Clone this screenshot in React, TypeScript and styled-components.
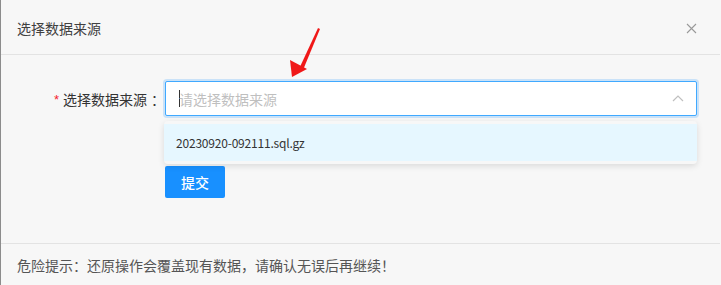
import styled, { createGlobalStyle } from "styled-components"

const GlobalStyle = createGlobalStyle`
    html, body {
        margin: 0;
        padding: 0;
        background: #f7f7f7;
    }
    body {
        font-family: "Noto Sans CJK SC", "Noto Sans", sans-serif;
    }
`

const App = () => {
    return (
        <Modal>
            <GlobalStyle />
            <Header>
                <Title>选择数据来源</Title>
                <Close>
                    <svg width="11" height="11" viewBox="0 0 11 11">
                        <path d="M1 1 L10 10 M10 1 L1 10" stroke="#999" strokeWidth="1.1" fill="none" />
                    </svg>
                </Close>
            </Header>
            <Body>
                <FormRow>
                    <Label>
                        <Required>*</Required>选择数据来源<Colon>：</Colon>
                    </Label>
                    <Field>
                        <Select>
                            <Caret />
                            <Placeholder>请选择数据来源</Placeholder>
                            <svg width="12" height="8" viewBox="0 0 12 8">
                                <path d="M1 7 L6 2 L11 7" stroke="#bfbfbf" strokeWidth="1.2" fill="none" />
                            </svg>
                        </Select>
                        <Dropdown>
                            <Option active>20230920-092111.sql.gz</Option>
                        </Dropdown>
                        <SubmitButton>提交</SubmitButton>
                    </Field>
                </FormRow>
                <Pointer width="40" height="60" viewBox="0 0 40 60">
                    <path d="M29 1 L31 2 L14 43 L10 42 Z" fill="#f01818" />
                    <path d="M3 50 L1 33 L18 42 Z" fill="#f01818" />
                </Pointer>
            </Body>
            <Footer>危险提示：还原操作会覆盖现有数据，请确认无误后再继续！</Footer>
        </Modal>
    )
}

const Modal = styled.div`
    position: relative;
    width: 720px;
    height: 285px;
    border-left: 1px solid #8c8c8c;
    background: #f7f7f7;
    display: flex;
    flex-direction: column;
    box-sizing: border-box;
`

const Header = styled.div`
    height: 54px;
    flex-shrink: 0;
    padding: 0 23px 0 16px;
    display: flex;
    align-items: center;
    justify-content: space-between;
    border-bottom: 1px solid #e3e3e3;
`

const Title = styled.div`
    font-size: 14px;
    color: #404040;
    margin-top: 1px;
`

const Close = styled.div`
    display: flex;
    margin-top: 2px;
`

const Body = styled.div`
    flex: 1;
    padding-top: 26px;
    position: relative;
`

const FormRow = styled.div`
    display: flex;
    align-items: flex-start;
`

const Label = styled.div`
    width: 164px;
    height: 36px;
    flex-shrink: 0;
    display: flex;
    align-items: center;
    justify-content: flex-end;
    font-size: 14px;
    color: #333;
    padding-right: 0;
    box-sizing: border-box;
`

const Colon = styled.span`
    margin-left: 4px;
`

const Required = styled.span`
    color: #f5222d;
    font-size: 13px;
    margin-right: 4px;
    font-family: "Liberation Sans", sans-serif;
`

const Field = styled.div`
    position: relative;
    width: 532px;
    display: flex;
    flex-direction: column;
`

const Select = styled.div`
    height: 35px;
    background: #fff;
    border: 1px solid #40a9ff;
    border-radius: 2px;
    box-shadow: 0 0 0 2px rgba(24, 144, 255, 0.2);
    display: flex;
    align-items: center;
    padding: 0 12px 0 13px;
    box-sizing: border-box;
    svg {
        margin-left: auto;
        margin-top: -2px;
    }
`

const Caret = styled.span`
    width: 1px;
    height: 17px;
    background: #333;
    margin-right: -1px;
`

const Placeholder = styled.span`
    font-size: 14px;
    color: #bfbfbf;
`

const Dropdown = styled.div`
    position: absolute;
    top: 40px;
    left: -1px;
    width: 533px;
    padding: 3px 0;
    background: #f7f7f7;
    border-radius: 4px;
    box-shadow: 0 2px 6px rgba(0, 0, 0, 0.12);
    z-index: 2;
`

const Option = styled.div<{ active?: boolean }>`
    height: 37px;
    display: flex;
    align-items: center;
    padding-left: 12px;
    font-size: 12px;
    letter-spacing: -0.2px;
    color: #333;
    background: ${(p) => (p.active ? "#e6f7ff" : "transparent")};
`

const SubmitButton = styled.button`
    margin-top: 50px;
    width: 60px;
    height: 32px;
    border: none;
    border-radius: 2px;
    background: #1890ff;
    color: #fff;
    font-size: 14px;
    font-family: inherit;
    font-weight: 500;
    padding: 0;
`

const Pointer = styled.svg`
    position: absolute;
    left: 288px;
    top: -28px;
    z-index: 3;
`

const Footer = styled.div`
    height: 41px;
    flex-shrink: 0;
    border-top: 1px solid #e3e3e3;
    display: flex;
    align-items: center;
    padding-left: 16px;
    font-size: 14px;
    color: #555;
`

export default App
